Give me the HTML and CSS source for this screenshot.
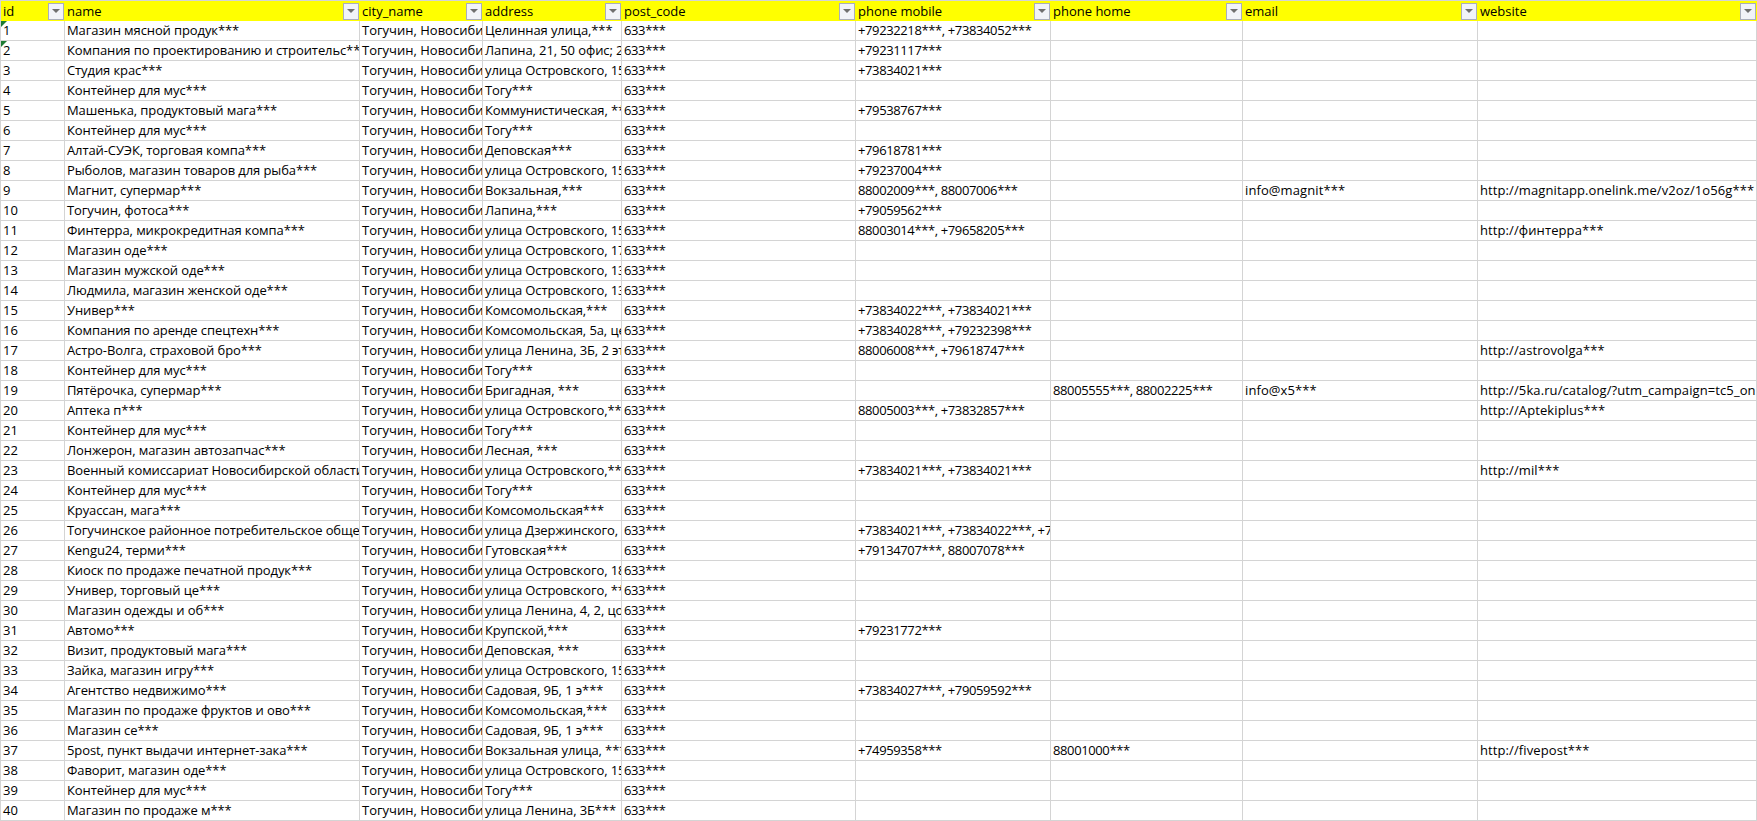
FILE: index.html
```html
<!DOCTYPE html>
<html lang="ru">
<head>
<meta charset="utf-8">
<title>Таблица</title>
<link rel="stylesheet" href="styles.css">
</head>
<body>
<table class="sheet">
<colgroup><col class="c1"><col class="c2"><col class="c3"><col class="c4"><col class="c5"><col class="c6"><col class="c7"><col class="c8"><col class="c9"><col class="c10"></colgroup>
<thead><tr>
<th><div class="hd"><span class="lbl">id</span><span class="flt"></span></div></th>
<th><div class="hd"><span class="lbl">name</span><span class="flt"></span></div></th>
<th><div class="hd"><span class="lbl">city_name</span><span class="flt"></span></div></th>
<th><div class="hd"><span class="lbl">address</span><span class="flt"></span></div></th>
<th><div class="hd"><span class="lbl">post_code</span><span class="flt"></span></div></th>
<th><div class="hd"><span class="lbl">phone mobile</span><span class="flt"></span></div></th>
<th><div class="hd"><span class="lbl">phone home</span><span class="flt"></span></div></th>
<th><div class="hd"><span class="lbl">email</span><span class="flt"></span></div></th>
<th><div class="hd"><span class="lbl">website</span><span class="flt"></span></div></th>
</tr></thead>
<tbody>
<tr><td class="tag">1</td><td>Магазин мясной продук***</td><td>Тогучин, Новосибирская область</td><td>Целинная улица,***</td><td>633***</td><td>+79232218***, +73834052***</td><td></td><td></td><td></td></tr>
<tr><td class="tag">2</td><td>Компания по проектированию и строительс***</td><td>Тогучин, Новосибирская область</td><td>Лапина, 21, 50 офис; 2 этаж***</td><td>633***</td><td>+79231117***</td><td></td><td></td><td></td></tr>
<tr><td>3</td><td>Студия крас***</td><td>Тогучин, Новосибирская область</td><td>улица Островского, 15***</td><td>633***</td><td>+73834021***</td><td></td><td></td><td></td></tr>
<tr><td>4</td><td>Контейнер для мус***</td><td>Тогучин, Новосибирская область</td><td>Тогу***</td><td>633***</td><td></td><td></td><td></td><td></td></tr>
<tr><td>5</td><td>Машенька, продуктовый мага***</td><td>Тогучин, Новосибирская область</td><td>Коммунистическая, ***</td><td>633***</td><td>+79538767***</td><td></td><td></td><td></td></tr>
<tr><td>6</td><td>Контейнер для мус***</td><td>Тогучин, Новосибирская область</td><td>Тогу***</td><td>633***</td><td></td><td></td><td></td><td></td></tr>
<tr><td>7</td><td>Алтай-СУЭК, торговая компа***</td><td>Тогучин, Новосибирская область</td><td>Деповская***</td><td>633***</td><td>+79618781***</td><td></td><td></td><td></td></tr>
<tr><td>8</td><td>Рыболов, магазин товаров для рыба***</td><td>Тогучин, Новосибирская область</td><td>улица Островского, 15***</td><td>633***</td><td>+79237004***</td><td></td><td></td><td></td></tr>
<tr><td>9</td><td>Магнит, супермар***</td><td>Тогучин, Новосибирская область</td><td>Вокзальная,***</td><td>633***</td><td>88002009***, 88007006***</td><td></td><td>info@magnit***</td><td>http://magnitapp.onelink.me/v2oz/1o56g***</td></tr>
<tr><td>10</td><td>Тогучин, фотоса***</td><td>Тогучин, Новосибирская область</td><td>Лапина,***</td><td>633***</td><td>+79059562***</td><td></td><td></td><td></td></tr>
<tr><td>11</td><td>Финтерра, микрокредитная компа***</td><td>Тогучин, Новосибирская область</td><td>улица Островского, 15***</td><td>633***</td><td>88003014***, +79658205***</td><td></td><td></td><td>http://финтерра***</td></tr>
<tr><td>12</td><td>Магазин оде***</td><td>Тогучин, Новосибирская область</td><td>улица Островского, 17***</td><td>633***</td><td></td><td></td><td></td><td></td></tr>
<tr><td>13</td><td>Магазин мужской оде***</td><td>Тогучин, Новосибирская область</td><td>улица Островского, 13***</td><td>633***</td><td></td><td></td><td></td><td></td></tr>
<tr><td>14</td><td>Людмила, магазин женской оде***</td><td>Тогучин, Новосибирская область</td><td>улица Островского, 13***</td><td>633***</td><td></td><td></td><td></td><td></td></tr>
<tr><td>15</td><td>Универ***</td><td>Тогучин, Новосибирская область</td><td>Комсомольская,***</td><td>633***</td><td>+73834022***, +73834021***</td><td></td><td></td><td></td></tr>
<tr><td>16</td><td>Компания по аренде спецтехн***</td><td>Тогучин, Новосибирская область</td><td>Комсомольская, 5а, цех***</td><td>633***</td><td>+73834028***, +79232398***</td><td></td><td></td><td></td></tr>
<tr><td>17</td><td>Астро-Волга, страховой бро***</td><td>Тогучин, Новосибирская область</td><td>улица Ленина, 3Б, 2 этаж***</td><td>633***</td><td>88006008***, +79618747***</td><td></td><td></td><td>http://astrovolga***</td></tr>
<tr><td>18</td><td>Контейнер для мус***</td><td>Тогучин, Новосибирская область</td><td>Тогу***</td><td>633***</td><td></td><td></td><td></td><td></td></tr>
<tr><td>19</td><td>Пятёрочка, супермар***</td><td>Тогучин, Новосибирская область</td><td>Бригадная, ***</td><td>633***</td><td></td><td>88005555***, 88002225***</td><td>info@x5***</td><td>http://5ka.ru/catalog/?utm_campaign=tc5_online***</td></tr>
<tr><td>20</td><td>Аптека п***</td><td>Тогучин, Новосибирская область</td><td>улица Островского,***</td><td>633***</td><td>88005003***, +73832857***</td><td></td><td></td><td>http://Aptekiplus***</td></tr>
<tr><td>21</td><td>Контейнер для мус***</td><td>Тогучин, Новосибирская область</td><td>Тогу***</td><td>633***</td><td></td><td></td><td></td><td></td></tr>
<tr><td>22</td><td>Лонжерон, магазин автозапчас***</td><td>Тогучин, Новосибирская область</td><td>Лесная, ***</td><td>633***</td><td></td><td></td><td></td><td></td></tr>
<tr><td>23</td><td>Военный комиссариат Новосибирской области***</td><td>Тогучин, Новосибирская область</td><td>улица Островского,***</td><td>633***</td><td>+73834021***, +73834021***</td><td></td><td></td><td>http://mil***</td></tr>
<tr><td>24</td><td>Контейнер для мус***</td><td>Тогучин, Новосибирская область</td><td>Тогу***</td><td>633***</td><td></td><td></td><td></td><td></td></tr>
<tr><td>25</td><td>Круассан, мага***</td><td>Тогучин, Новосибирская область</td><td>Комсомольская***</td><td>633***</td><td></td><td></td><td></td><td></td></tr>
<tr><td>26</td><td>Тогучинское районное потребительское общество***</td><td>Тогучин, Новосибирская область</td><td>улица Дзержинского, 7***</td><td>633***</td><td>+73834021***, +73834022***, +73834021***</td><td></td><td></td><td></td></tr>
<tr><td>27</td><td>Kengu24, терми***</td><td>Тогучин, Новосибирская область</td><td>Гутовская***</td><td>633***</td><td>+79134707***, 88007078***</td><td></td><td></td><td></td></tr>
<tr><td>28</td><td>Киоск по продаже печатной продук***</td><td>Тогучин, Новосибирская область</td><td>улица Островского, 18***</td><td>633***</td><td></td><td></td><td></td><td></td></tr>
<tr><td>29</td><td>Универ, торговый це***</td><td>Тогучин, Новосибирская область</td><td>улица Островского, ***</td><td>633***</td><td></td><td></td><td></td><td></td></tr>
<tr><td>30</td><td>Магазин одежды и об***</td><td>Тогучин, Новосибирская область</td><td>улица Ленина, 4, 2, цоколь***</td><td>633***</td><td></td><td></td><td></td><td></td></tr>
<tr><td>31</td><td>Автомо***</td><td>Тогучин, Новосибирская область</td><td>Крупской,***</td><td>633***</td><td>+79231772***</td><td></td><td></td><td></td></tr>
<tr><td>32</td><td>Визит, продуктовый мага***</td><td>Тогучин, Новосибирская область</td><td>Деповская, ***</td><td>633***</td><td></td><td></td><td></td><td></td></tr>
<tr><td>33</td><td>Зайка, магазин игру***</td><td>Тогучин, Новосибирская область</td><td>улица Островского, 15***</td><td>633***</td><td></td><td></td><td></td><td></td></tr>
<tr><td>34</td><td>Агентство недвижимо***</td><td>Тогучин, Новосибирская область</td><td>Садовая, 9Б, 1 э***</td><td>633***</td><td>+73834027***, +79059592***</td><td></td><td></td><td></td></tr>
<tr><td>35</td><td>Магазин по продаже фруктов и ово***</td><td>Тогучин, Новосибирская область</td><td>Комсомольская,***</td><td>633***</td><td></td><td></td><td></td><td></td></tr>
<tr><td>36</td><td>Магазин се***</td><td>Тогучин, Новосибирская область</td><td>Садовая, 9Б, 1 э***</td><td>633***</td><td></td><td></td><td></td><td></td></tr>
<tr><td>37</td><td>5post, пункт выдачи интернет-зака***</td><td>Тогучин, Новосибирская область</td><td>Вокзальная улица, ***</td><td>633***</td><td>+74959358***</td><td>88001000***</td><td></td><td>http://fivepost***</td></tr>
<tr><td>38</td><td>Фаворит, магазин оде***</td><td>Тогучин, Новосибирская область</td><td>улица Островского, 15***</td><td>633***</td><td></td><td></td><td></td><td></td></tr>
<tr><td>39</td><td>Контейнер для мус***</td><td>Тогучин, Новосибирская область</td><td>Тогу***</td><td>633***</td><td></td><td></td><td></td><td></td></tr>
<tr><td>40</td><td>Магазин по продаже м***</td><td>Тогучин, Новосибирская область</td><td>улица Ленина, 3Б***</td><td>633***</td><td></td><td></td><td></td><td></td></tr>
</tbody>
</table>
</body>
</html>
```
FILE: styles.css
```css
html, body { margin: 0; padding: 0; background: #fff; overflow: hidden; height: 100%; }
.sheet {
  table-layout: fixed;
  border-collapse: separate;
  border-spacing: 0;
  width: 1756px;
  border-left: 1px solid #d4d4d4;
  border-top: 1px solid #d4d4d4;
  font-family: "Open Sans", "Noto Sans", sans-serif;
  font-size: 13px;
  color: #000;
}
.c1 { width: 64px; }
.c2 { width: 295px; }
.c3 { width: 123px; }
.c4 { width: 139px; }
.c5 { width: 234px; }
.c6 { width: 195px; }
.c7 { width: 192px; }
.c8 { width: 235px; }
.c9 { width: 279px; }
th, td {
  box-sizing: border-box;
  padding: 0;
  overflow: hidden;
  white-space: nowrap;
  text-align: left;
  font-weight: 400;
}
th { height: 20px; background: #ffff00; }
td {
  height: 20px;
  line-height: 19px;
  padding-left: 2px;
  border-right: 1px solid #d4d4d4;
  border-bottom: 1px solid #d4d4d4;
}
td:nth-child(2), td:nth-child(4) { letter-spacing: -0.1px; }
td:nth-child(5), td:nth-child(6), td:nth-child(7) { letter-spacing: -0.38px; }
td:nth-child(8), td:nth-child(9) { letter-spacing: 0.1px; }
.hd { display: flex; align-items: center; justify-content: space-between; height: 20px; padding: 0 1px 0 2px; }
.lbl { line-height: 18px; }
.flt {
  box-sizing: border-box;
  flex: none;
  display: flex;
  align-items: center;
  justify-content: center;
  width: 16px;
  height: 17px;
  background: #f1f3f8;
  border: 1px solid #a9aebc;
}
.flt::after {
  content: "";
  width: 0;
  height: 0;
  border-left: 4px solid transparent;
  border-right: 4px solid transparent;
  border-top: 4px solid #6f6f6f;
}
td.tag { position: relative; }
td.tag::before {
  content: "";
  position: absolute;
  left: 0;
  top: 0;
  width: 0;
  height: 0;
  border-top: 6px solid #1e7b34;
  border-right: 6px solid transparent;
}
```
